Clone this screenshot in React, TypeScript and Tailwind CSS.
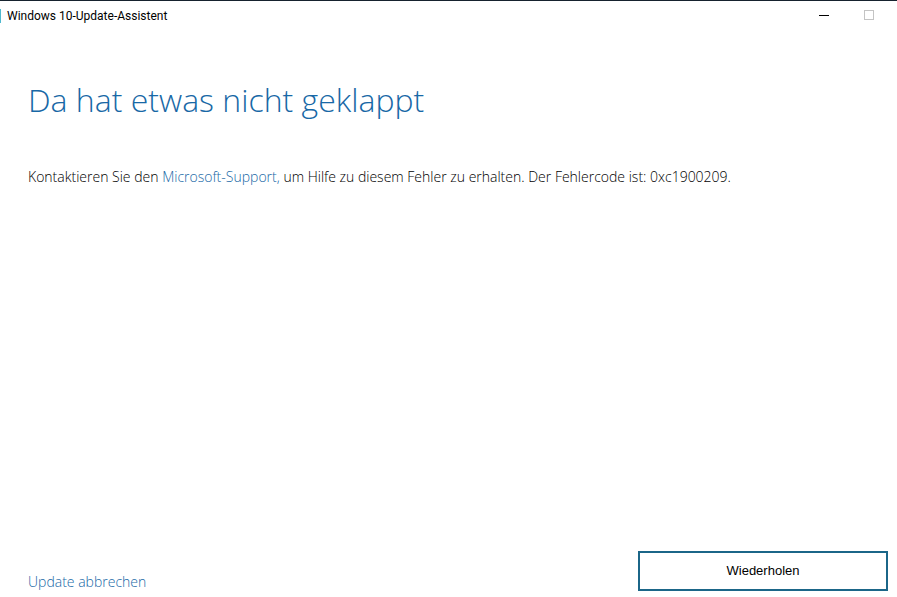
function TitleBar() {
  return (
    <header className="flex h-[30px] items-center border-t border-[#16222e] pr-[22px]">
      <span aria-hidden="true" className="h-3.5 w-px bg-[#4fb9cf]" />
      <h1 className="ml-1.5 flex-1 font-['Roboto','Open_Sans',sans-serif] text-xs font-normal text-black">
        Windows 10-Update-Assistent
      </h1>
      <div className="flex items-center gap-[33px]">
        <button type="button" aria-label="Minimieren" className="flex size-3 items-center justify-center">
          <svg width="12" height="12" viewBox="0 0 12 12" shapeRendering="crispEdges">
            <path d="M1 5.5h10" stroke="#000" fill="none" />
          </svg>
        </button>
        <button type="button" aria-label="Maximieren" disabled className="flex size-3 items-center justify-center">
          <svg width="12" height="12" viewBox="0 0 12 12" shapeRendering="crispEdges">
            <rect x="1.5" y="0.5" width="9" height="9" stroke="#c4c4c4" fill="none" />
          </svg>
        </button>
      </div>
    </header>
  );
}

export default function App() {
  return (
    <div className="flex min-h-screen flex-col bg-white font-['Open_Sans','Noto_Sans',sans-serif] font-light">
      <TitleBar />
      <main className="flex-1 px-7 pt-12">
        <h2 className="text-[32px] leading-11 text-[#1868a6]">Da hat etwas nicht geklappt</h2>
        <p className="mt-11 text-sm leading-[22px] text-black">
          Kontaktieren Sie den{" "}
          <a href="#support" className="text-[#1868a6]">
            Microsoft-Support,
          </a>{" "}
          um Hilfe zu diesem Fehler zu erhalten. Der Fehlercode ist: 0xc1900209.
        </p>
      </main>
      <footer className="flex items-end justify-between pr-[9px] pb-1.5 pl-7">
        <a href="#cancel" className="text-sm leading-[18px] text-[#1868a6]">
          Update abbrechen
        </a>
        <button
          type="button"
          className="h-10 w-[250px] border-2 border-[#1b6688] bg-white font-['Liberation_Sans',Arial,sans-serif] text-[13px] font-normal text-black"
        >
          Wiederholen
        </button>
      </footer>
    </div>
  );
}
